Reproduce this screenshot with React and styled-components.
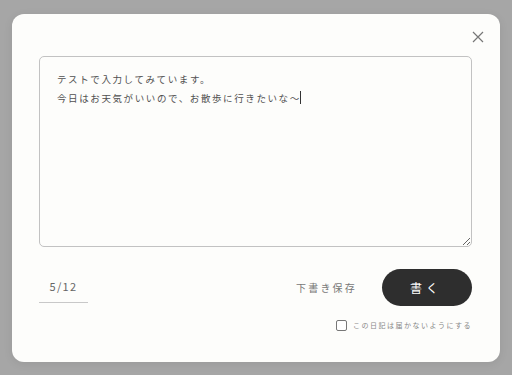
import React from "react"
import styled, { createGlobalStyle } from "styled-components"

const GlobalStyle = createGlobalStyle`
  html, body {
    margin: 0;
    padding: 0;
    height: 100%;
    background: #a6a6a6;
  }
  #root {
    height: 100%;
  }
  * {
    box-sizing: border-box;
  }
`

const jp = `"Noto Sans CJK JP", "Noto Sans", sans-serif`

const Overlay = styled.div`
  width: 100%;
  height: 100vh;
  display: flex;
  align-items: center;
  justify-content: center;
  background: #a6a6a6;
`

const Modal = styled.div`
  width: 488px;
  height: 348px;
  background: #fdfdfb;
  border-radius: 12px;
  padding: 0 28px 0 27px;
  display: flex;
  flex-direction: column;
  font-family: ${jp};
  box-shadow: 0 2px 10px rgba(0, 0, 0, 0.08);
`

const Header = styled.div`
  height: 42px;
  flex-shrink: 0;
  display: flex;
  justify-content: flex-end;
  align-items: flex-start;
  margin-right: -13px;
`

const CloseBtn = styled.button`
  width: 14px;
  height: 14px;
  margin-top: 16px;
  padding: 0;
  border: none;
  background: none;
  display: flex;
  align-items: center;
  justify-content: center;
  cursor: pointer;
`

const Editor = styled.div`
  height: 191px;
  flex-shrink: 0;
  border: 1px solid #c2c2c2;
  border-radius: 5px;
  padding: 13px 17px;
  resize: both;
  overflow: auto;
  font-size: 9.5px;
  line-height: 19px;
  letter-spacing: 1.6px;
  color: #505050;
  background: #fdfdfb;
`

const Line = styled.div`
  white-space: nowrap;
`

const Caret = styled.span`
  display: inline-block;
  width: 1px;
  height: 13px;
  background: #333;
  vertical-align: -2px;
  margin-left: -1px;
`

const Footer = styled.div`
  margin-top: 22px;
  display: flex;
  align-items: center;
`

const Counter = styled.div`
  width: 49px;
  height: 32px;
  padding-top: 7px;
  text-align: center;
  font-size: 11px;
  letter-spacing: 1.4px;
  color: #666;
  border-bottom: 1px solid #c8c8c8;
`

const Actions = styled.div`
  margin-left: auto;
  display: flex;
  align-items: center;
  gap: 25px;
`

const DraftBtn = styled.button`
  border: none;
  background: none;
  padding: 0;
  font-family: ${jp};
  font-size: 10px;
  letter-spacing: 2.2px;
  color: #777;
  cursor: pointer;
`

const WriteBtn = styled.button`
  width: 90px;
  height: 37px;
  border: none;
  border-radius: 19px;
  background: #2e2e2e;
  color: #fff;
  font-family: ${jp};
  font-size: 12px;
  letter-spacing: 4px;
  padding-left: 4px;
  cursor: pointer;
`

const CheckRow = styled.label`
  margin-top: 14px;
  align-self: flex-end;
  display: flex;
  align-items: center;
  gap: 6px;
  font-size: 7px;
  letter-spacing: 1.5px;
  color: #888;
`

const Box = styled.span`
  width: 11px;
  height: 11px;
  border: 1px solid #777;
  border-radius: 2px;
  background: #fff;
`

export default function App() {
  return (
    <>
      <GlobalStyle />
      <Overlay>
        <Modal>
          <Header>
            <CloseBtn aria-label="close">
              <svg width="12" height="12" viewBox="0 0 12 12">
                <path d="M1 1L11 11M11 1L1 11" stroke="#777" strokeWidth="1.2" fill="none" />
              </svg>
            </CloseBtn>
          </Header>
          <Editor>
            <Line>テストで入力してみています。</Line>
            <Line>
              今日はお天気がいいので、お散歩に行きたいな〜<Caret />
            </Line>
          </Editor>
          <Footer>
            <Counter>5/12</Counter>
            <Actions>
              <DraftBtn>下書き保存</DraftBtn>
              <WriteBtn>書く</WriteBtn>
            </Actions>
          </Footer>
          <CheckRow>
            <Box />
            この日記は届かないようにする
          </CheckRow>
        </Modal>
      </Overlay>
    </>
  )
}
